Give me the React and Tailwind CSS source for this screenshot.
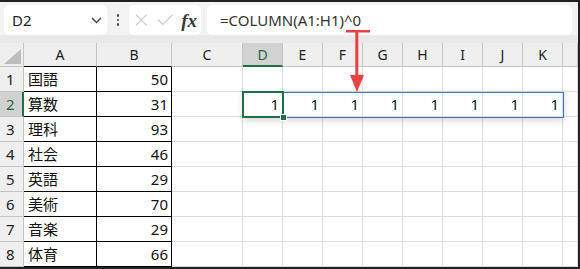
import React from "react";

const cols = ["A", "B", "C", "D", "E", "F", "G", "H", "I", "J", "K", ""];
const data = [
  ["国語", "50"],
  ["算数", "31"],
  ["理科", "93"],
  ["社会", "46"],
  ["英語", "29"],
  ["美術", "70"],
  ["音楽", "29"],
  ["体育", "66"],
];

function HeaderCell({ label, idx }) {
  if (idx === 3) {
    return (
      <div className="h-[24px] flex items-center justify-center bg-[#d2d2d2] border-r border-[#c4c4c4] border-b-2 border-b-[#1e7145] text-[14px] text-[#1e6b40]">
        {label}
      </div>
    );
  }
  if (idx === 0 || idx === 1) {
    return (
      <div className="h-[24px] flex items-center justify-center bg-[#efefef] border-r border-[#c4c4c4] border-b border-b-black text-[14px] text-[#222]">
        {label}
      </div>
    );
  }
  return (
    <div className="h-[24px] flex items-center justify-center bg-[#efefef] border-r border-[#c4c4c4] border-b border-b-[#c4c4c4] text-[14px] text-[#222]">
      {label}
    </div>
  );
}

function RowHeader({ n }) {
  if (n === 2) {
    return (
      <div className="h-[25px] flex items-center pl-[6px] bg-[#d2d2d2] border-r-2 border-r-[#1e7145] border-b border-b-[#c4c4c4] text-[15px] text-[#1e6b40]">
        {n}
      </div>
    );
  }
  return (
    <div className="h-[25px] flex items-center pl-[6px] bg-[#efefef] border-r border-r-[#c4c4c4] border-b border-b-[#c4c4c4] text-[15px] text-[#222]">
      {n}
    </div>
  );
}

function Cell({ r, c }) {
  if (c === 0) {
    return (
      <div className="h-[25px] flex items-center pl-[4px] bg-white border-r border-b border-black text-[15px] text-[#111]">
        {data[r][0]}
      </div>
    );
  }
  if (c === 1) {
    return (
      <div className="h-[25px] flex items-center justify-end pr-[3px] bg-white border-r border-b border-black text-[15px] text-[#111]">
        {data[r][1]}
      </div>
    );
  }
  const spill = r === 1 && c >= 3 && c <= 10;
  return (
    <div className="h-[25px] flex items-center justify-end pr-[3px] bg-white border-r border-b border-[#dcdcdc] text-[15px] text-[#111]">
      {spill ? "1" : ""}
    </div>
  );
}

export default function App() {
  return (
    <div className="relative w-[580px] h-[269px] overflow-hidden bg-[#f3f3f3] border-t-2 border-r-2 border-b-2 border-[#222] font-['Noto_Sans','Noto_Sans_CJK_JP',sans-serif]">
      {/* formula bar */}
      <div className="h-[41px] flex items-start pt-[3px] pl-[4px] pr-[6px] bg-[#f3f3f3] border-b-[8px] border-[#e9e9ec]">
        <div className="w-[103px] h-[30px] bg-white rounded-[5px] flex items-center justify-between pl-[8px] pr-[5px]">
          <span className="text-[15px] text-[#222]">D2</span>
          <svg width="11" height="7" viewBox="0 0 11 7">
            <path d="M1 1 L5.5 5.5 L10 1" fill="none" stroke="#444" strokeWidth="1.4" />
          </svg>
        </div>
        <div className="w-[22px] h-[30px] flex flex-col items-center justify-center gap-[2px]">
          <span className="w-[2.5px] h-[2.5px] bg-[#444] rounded-full" />
          <span className="w-[2.5px] h-[2.5px] bg-[#444] rounded-full" />
          <span className="w-[2.5px] h-[2.5px] bg-[#444] rounded-full" />
        </div>
        <div className="w-[72px] h-[30px] bg-white rounded-[5px] flex items-center pl-[6px] pr-[4px]">
          <svg width="13" height="12" viewBox="0 0 13 12">
            <path d="M1 0.5 L12 11.5 M12 0.5 L1 11.5" stroke="#c8c8c8" strokeWidth="1.2" fill="none" />
          </svg>
          <svg width="17" height="12" viewBox="0 0 17 12" className="ml-[9px]">
            <path d="M1 5.5 L6 10.5 L16 0.8" stroke="#c8c8c8" strokeWidth="1.2" fill="none" />
          </svg>
          <span className="ml-[8px] text-[19px] italic font-bold text-[#3a3a3a] font-['Liberation_Serif',serif] leading-none">fx</span>
        </div>
        <div className="ml-[6px] flex-1 h-[30px] bg-white rounded-[5px] flex items-center pl-[13px]">
          <span className="text-[15px] text-[#333]">=COLUMN(A1:H1)^0</span>
        </div>
      </div>

      {/* grid */}
      <div className="relative grid grid-cols-[24px_73px_75px_71px_40px_40px_40px_40px_40px_40px_40px_40px_15px]">
        <div className="h-[24px] bg-[#efefef] border-r border-b border-[#c4c4c4] flex items-end justify-end pr-[2px] pb-[2px]">
          <svg width="17" height="15" viewBox="0 0 17 15">
            <polygon points="17,0 17,15 0,15" fill="#bdbdbd" />
          </svg>
        </div>
        {cols.map((c, i) => (
          <HeaderCell key={"h" + i} label={c} idx={i} />
        ))}
        {data.map((row, r) => (
          <React.Fragment key={"r" + r}>
            <RowHeader n={r + 1} />
            {cols.map((_, c) => (
              <Cell key={r + "-" + c} r={r} c={c} />
            ))}
          </React.Fragment>
        ))}

        {/* spill range */}
        <div className="absolute left-[243px] top-[49px] w-[321px] h-[26px] border border-[#4472c4] shadow-[0_2px_7px_rgba(0,0,0,0.18)] pointer-events-none" />
        {/* active cell */}
        <div className="absolute left-[242px] top-[48px] w-[42px] h-[27px] border-2 border-[#1e7145] pointer-events-none" />
        {/* fill handle */}
        <div className="absolute left-[280px] top-[71px] w-[7px] h-[7px] bg-[#1e7145] border border-white" />
      </div>

      {/* red arrow */}
      <svg className="absolute left-[344px] top-[28px]" width="28" height="64" viewBox="0 0 28 64">
        <rect x="2" y="0" width="24" height="2.5" fill="#e8413f" />
        <rect x="11.3" y="0" width="3" height="47" fill="#e8413f" />
        <polygon points="6,45 20,45 13,62" fill="#e8413f" />
      </svg>
    </div>
  );
}
